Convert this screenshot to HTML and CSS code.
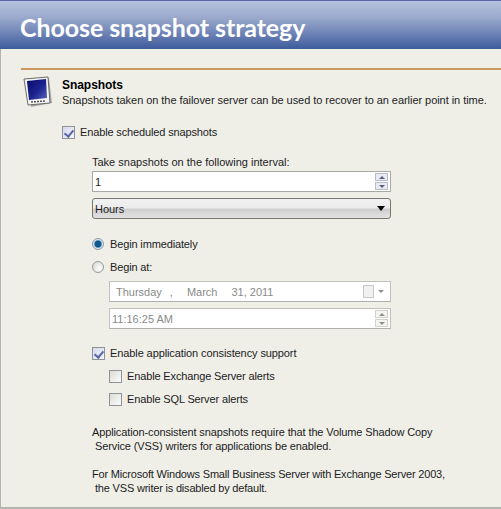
FILE: index.html
```html
<!DOCTYPE html>
<html lang="en">
<head>
    <meta charset="UTF-8">
    <title>Choose snapshot strategy</title>
    <link rel="stylesheet" href="styles.css">
</head>
<body>
    <div class="wizard">
        <div class="banner"><h1>Choose snapshot strategy</h1></div>

        <div class="rule"></div>

        <div class="intro">
            <svg class="intro-icon" width="30" height="32" viewBox="0 0 30 32">
                <defs>
                    <linearGradient id="screen" x1="0" y1="0" x2="1" y2="1">
                        <stop offset="0" stop-color="#0a0a6e"/>
                        <stop offset="0.55" stop-color="#1c2490"/>
                        <stop offset="1" stop-color="#5a66b8"/>
                    </linearGradient>
                </defs>
                <path d="M4 5 L26 2 L29 27 L8 31 Z" fill="#a8a8a8"/>
                <path d="M1 3 L25 1 L27 27 L5 29 Z" fill="#f4f4f4" stroke="#6c6c6c" stroke-width="1"/>
                <path d="M4 5 L23 3 L24 22 L6 24 Z" fill="url(#screen)"/>
                <path d="M8 26 L22 25" stroke="#555" stroke-width="1.5" stroke-dasharray="2 1"/>
            </svg>
            <div class="intro-text">
                <h2>Snapshots</h2>
                <p>Snapshots taken on the failover server can be used to recover to an earlier point in time.</p>
            </div>
        </div>

        <label class="option enable-row">
            <span class="check checked"></span>Enable scheduled snapshots
        </label>

        <div class="settings">
            <div class="interval-label">Take snapshots on the following interval:</div>

            <div class="field spin-field">
                <span class="field-value">1</span>
                <span class="spin">
                    <span class="spin-btn"><span class="arrow-up"></span></span>
                    <span class="spin-btn"><span class="arrow-down"></span></span>
                </span>
            </div>

            <div class="dropdown">
                <span>Hours</span>
                <span class="dropdown-arrow"></span>
            </div>

            <label class="option radio-first"><span class="radio selected"></span>Begin immediately</label>
            <label class="option radio-second"><span class="radio"></span>Begin at:</label>

            <div class="disabled-group">
                <div class="field date-field">
                    <span class="date-parts">
                        <span>Thursday</span><span>,</span><span>March</span><span>31, 2011</span>
                    </span>
                    <span class="cal-button">
                        <span class="cal"></span>
                        <span class="arrow-down"></span>
                    </span>
                </div>
                <div class="field time-field">
                    <span class="field-value">11:16:25 AM</span>
                    <span class="spin">
                        <span class="spin-btn"><span class="arrow-up"></span></span>
                        <span class="spin-btn"><span class="arrow-down"></span></span>
                    </span>
                </div>
            </div>

            <label class="option consistency"><span class="check checked"></span>Enable application consistency support</label>
            <label class="option alert first-alert"><span class="check"></span>Enable Exchange Server alerts</label>
            <label class="option alert"><span class="check"></span>Enable SQL Server alerts</label>

            <p class="note note-first">Application-consistent snapshots require that the Volume Shadow Copy<br><span class="nudge">Service (VSS) writers for applications be enabled.</span></p>
            <p class="note note-second">For Microsoft Windows Small Business Server with Exchange Server 2003,<br><span class="nudge">the VSS writer is disabled by default.</span></p>
        </div>
    </div>
</body>
</html>
```

FILE: styles.css
```css
* {
    margin: 0;
    padding: 0;
    box-sizing: border-box;
}

html, body {
    width: 501px;
    height: 509px;
    overflow: hidden;
}

body {
    font-family: "Liberation Sans", Arial, sans-serif;
    font-size: 11px;
    line-height: 14px;
    letter-spacing: -0.05px;
    color: #1c1c1c;
    background-color: #efefe8;
}

.wizard {
    height: 509px;
    border-left: 1px solid #b4b4b0;
    border-bottom: 2px solid #b4b4b0;
}

/* Banner */
.banner {
    height: 49px;
    margin-left: -1px;
    padding-left: 20px;
    border-top: 1px solid #5f66a8;
    background: linear-gradient(#b6c1dc 0%, #9aa9cc 35%, #6a80b4 70%, #3d5a9c 100%);
}

.banner h1 {
    font-family: Lato, sans-serif;
    font-size: 25px;
    font-weight: 700;
    line-height: 52px;
    letter-spacing: -0.08px;
    color: #fff;
}

.rule {
    height: 2px;
    margin: 19px 0 0 20px;
    background-color: #c99a5c;
}

/* Intro */
.intro {
    display: flex;
    height: 41px;
    margin: 5px 0 0 22px;
}

.intro-icon {
    flex: none;
    margin-top: 1px;
}

.intro-text {
    margin: 3px 0 0 9px;
}

.intro-text h2 {
    font-size: 12px;
    font-weight: 700;
    line-height: 15px;
    color: #000;
}

.intro-text p {
    white-space: nowrap;
}

/* Checkboxes and radios */
.option {
    display: flex;
    align-items: center;
    height: 14px;
    white-space: nowrap;
    letter-spacing: -0.14px;
}

.enable-row {
    margin: 9px 0 0 61px;
}

.check {
    flex: none;
    position: relative;
    width: 13px;
    height: 13px;
    margin-right: 5px;
    border: 1px solid #8f9398;
    background: linear-gradient(135deg, #dcdcd6, #fbfbfa);
}

.check.checked {
    background: linear-gradient(135deg, #d4d8ee, #f6f6fc);
}

.check.checked::after {
    content: "";
    position: absolute;
    left: 3px;
    top: 1px;
    width: 4px;
    height: 7px;
    border: solid #5a68a8;
    border-width: 0 2px 2px 0;
    transform: rotate(40deg);
}

.radio {
    flex: none;
    width: 12px;
    height: 12px;
    margin-right: 6px;
    border: 1px solid #9a9a9a;
    border-radius: 50%;
    background: radial-gradient(circle at 65% 65%, #fff, #d2d2cc);
}

.radio.selected {
    border-color: #8a9ab0;
    background: radial-gradient(circle, #0e5a90 0 3px, #5d93b8 3.5px, #e4e8ec 4.5px);
}

/* Settings column */
.settings {
    margin-left: 91px;
    width: 299px;
}

.interval-label {
    margin-top: 16px;
    letter-spacing: 0;
}

.field {
    display: flex;
    align-items: center;
    justify-content: space-between;
    height: 21px;
    border: 1px solid #a8a8a4;
    background-color: #fff;
}

.spin-field {
    margin-top: 2px;
}

.field-value {
    padding-left: 2px;
}

.spin {
    display: flex;
    flex-direction: column;
    gap: 1px;
    margin-right: 2px;
}

.spin-btn {
    display: flex;
    align-items: center;
    justify-content: center;
    width: 13px;
    height: 8px;
    border: 1px solid #b8bcc8;
    background-color: #e9ebf4;
}

.arrow-up, .arrow-down {
    width: 0;
    height: 0;
    border-left: 3px solid transparent;
    border-right: 3px solid transparent;
}

.arrow-up {
    border-bottom: 3px solid #5c6078;
}

.arrow-down {
    border-top: 3px solid #5c6078;
}

.dropdown {
    display: flex;
    align-items: center;
    justify-content: space-between;
    height: 21px;
    margin-top: 6px;
    padding: 0 5px 0 2px;
    border: 1px solid #77776f;
    border-radius: 3px;
    background: linear-gradient(#f2f2f2 0%, #ececec 45%, #cfcfcf 55%, #e2e2e2 100%);
}

.dropdown-arrow {
    width: 0;
    height: 0;
    border-left: 4px solid transparent;
    border-right: 4px solid transparent;
    border-top: 5px solid #000;
}

.radio-first {
    margin-top: 18px;
}

.radio-second {
    margin-top: 9px;
}

.disabled-group {
    margin: 7px 0 0 17px;
    color: #8a8a8a;
    letter-spacing: 0;
}

.disabled-group .field {
    border-color: #c0c0bc;
    border-bottom-color: #b0b0ac;
}

.date-field {
    padding-left: 6px;
}

.date-parts {
    display: flex;
    gap: 8px;
}

.date-parts span:nth-child(2) {
    margin-right: 6px;
}

.date-parts span:nth-child(3) {
    margin-right: 6px;
}

.cal-button {
    display: flex;
    align-items: center;
    gap: 4px;
    margin-right: 6px;
}

.cal {
    width: 11px;
    height: 13px;
    border: 1px solid #c8c8c8;
    background-color: #f0f0f0;
}

.cal-button .arrow-down {
    border-top-color: #b0b0b0;
}

.time-field {
    margin-top: 6px;
}

.disabled-group .spin-btn {
    border-color: #d0d0cc;
    background-color: #f4f4f0;
}

.disabled-group .arrow-up {
    border-bottom-color: #909090;
}

.disabled-group .arrow-down {
    border-top-color: #909090;
}

.consistency {
    margin-top: 17px;
    letter-spacing: -0.1px;
}

.alert {
    margin: 9px 0 0 17px;
}

.first-alert {
    margin-top: 9px;
}

.note {
    white-space: nowrap;
    letter-spacing: -0.12px;
}

.note-first {
    margin-top: 19px;
}

.note-second {
    margin-top: 14px;
    letter-spacing: -0.19px;
}

.nudge {
    margin-left: 3px;
}
```
